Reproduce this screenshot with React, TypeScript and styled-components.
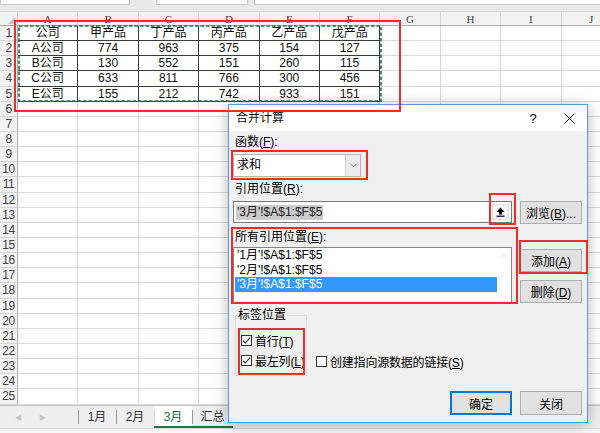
import styled, { createGlobalStyle } from 'styled-components'
import { ChevronDown, ChevronUp } from 'lucide-react'

const columns = ['A', 'B', 'C', 'D', 'E', 'F', 'G', 'H', 'I', 'J']

const table = [
  ['公司', '甲产品', '丁产品', '丙产品', '乙产品', '戊产品'],
  ['A公司', '774', '963', '375', '154', '127'],
  ['B公司', '130', '552', '151', '260', '115'],
  ['C公司', '633', '811', '766', '300', '456'],
  ['E公司', '155', '212', '742', '933', '151'],
]

const refs = ["'1月'!$A$1:$F$5", "'2月'!$A$1:$F$5", "'3月'!$A$1:$F$5"]

const sheets = [
  { name: '1月', width: 38 },
  { name: '2月', width: 38 },
  { name: '3月', width: 38, active: true, line: true },
  { name: '汇总', width: 41, line: true },
]

// red annotation frames drawn over the screenshot
const marks = [
  { left: 14, top: 20, width: 387, height: 92 },
  { left: 231, top: 150, width: 137, height: 30 },
  { left: 489, top: 193, width: 27, height: 32 },
  { left: 231, top: 227, width: 287, height: 77 },
  { left: 519, top: 240, width: 69, height: 34 },
  { left: 238, top: 328, width: 67, height: 47 },
]

const Check = () => (
  <svg width="9" height="9" viewBox="0 0 9 9">
    <path d="M1 4.6 L3.4 7 L8 1.6" fill="none" stroke="#333" strokeWidth="1.1" />
  </svg>
)

const Accel = ({ k }: { k: string }) => (
  <>
    (<u>{k}</u>)
  </>
)

export default function App() {
  return (
    <>
      <GlobalStyle />
      <Screen>
        <TopStrip>
          <FormulaBox $w={128} />
          <FormulaBox $w={90} />
          <FormulaBox $w={350} />
        </TopStrip>

        <Sheet>
          <HeaderRow>
            <Corner>
              <CornerTriangle />
            </Corner>
            {columns.map((c) => (
              <ColHead key={c}>{c}</ColHead>
            ))}
          </HeaderRow>
          {Array.from({ length: 25 }, (_, r) => (
            <Row key={r}>
              <RowHead>{r + 1}</RowHead>
              {columns.map((c, ci) => {
                const boxed = r < 5 && ci < 6
                return (
                  <Cell key={c} $boxed={boxed}>
                    {boxed ? table[r][ci] : ''}
                  </Cell>
                )
              })}
            </Row>
          ))}
          <Ants width="364" height="77">
            <rect x="1" y="1" width="362" height="75" fill="none" stroke="#1f7145" strokeWidth="1.6" strokeDasharray="3.5 2" />
          </Ants>
        </Sheet>

        <TabBar>
          <TabRow>
            <TabNav>
              <span>◀</span>
              <span>▶</span>
            </TabNav>
            {sheets.map((s) => (
              <SheetTab key={s.name} $w={s.width} $active={!!s.active} $line={!!s.line}>
                {s.name}
              </SheetTab>
            ))}
          </TabRow>
          <StatusStrip />
        </TabBar>

        <Dialog>
          <TitleBar>
            <Title>合并计算</Title>
            <TitleButton>?</TitleButton>
            <TitleButton>
              <svg width="11" height="11" viewBox="0 0 11 11">
                <path d="M0.5 0.5 L10.5 10.5 M10.5 0.5 L0.5 10.5" stroke="#111" strokeWidth="1" />
              </svg>
            </TitleButton>
          </TitleBar>

          <Body>
            <Label $mt={4}>
              函数<Accel k="F" />:
            </Label>
            <Select>
              <SelectValue>求和</SelectValue>
              <SelectArrow>
                <ChevronDown size={11} strokeWidth={1.4} color="#555" />
              </SelectArrow>
            </Select>

            <Label $mt={5}>
              引用位置<Accel k="R" />:
            </Label>
            <FieldRow>
              <RefInput>
                <Selected>'3月'!$A$1:$F$5</Selected>
                <RefButton>
                  <svg width="9" height="10" viewBox="0 0 9 10">
                    <path d="M4.5 0.5 L8.5 5 H6 V7.5 H3 V5 H0.5 Z" fill="#000" />
                    <rect x="0.5" y="8.6" width="8" height="1.2" fill="#000" />
                  </svg>
                </RefButton>
              </RefInput>
              <DlgButton>
                浏览<Accel k="B" />...
              </DlgButton>
            </FieldRow>

            <Label $mt={6}>
              所有引用位置<Accel k="E" />:
            </Label>
            <ListRow>
              <ListBox>
                <Items>
                  {refs.map((r, i) => (
                    <Item key={r} $selected={i === 2}>
                      {r}
                    </Item>
                  ))}
                </Items>
                <ScrollBar>
                  <ChevronUp size={10} strokeWidth={1.3} color="#bdbdbd" />
                  <ChevronDown size={10} strokeWidth={1.3} color="#bdbdbd" />
                </ScrollBar>
              </ListBox>
              <ButtonColumn>
                <DlgButton>
                  添加<Accel k="A" />
                </DlgButton>
                <DlgButton>
                  删除<Accel k="D" />
                </DlgButton>
              </ButtonColumn>
            </ListRow>

            <GroupRow>
              <Group>
                <Legend>标签位置</Legend>
                <CheckList>
                  <CheckRow>
                    <CheckBox>
                      <Check />
                    </CheckBox>
                    <span>
                      首行<Accel k="T" />
                    </span>
                  </CheckRow>
                  <CheckRow>
                    <CheckBox>
                      <Check />
                    </CheckBox>
                    <span>
                      最左列<Accel k="L" />
                    </span>
                  </CheckRow>
                </CheckList>
              </Group>
              <LinkCheck>
                <CheckBox />
                <span>
                  创建指向源数据的链接<Accel k="S" />
                </span>
              </LinkCheck>
            </GroupRow>

            <Footer>
              <DlgButton $primary $h={24}>
                确定
              </DlgButton>
              <DlgButton $h={24}>关闭</DlgButton>
            </Footer>
          </Body>
        </Dialog>

        {marks.map((m, i) => (
          <Mark key={i} style={{ left: m.left, top: m.top, width: m.width, height: m.height }} />
        ))}
      </Screen>
    </>
  )
}

const uiFont = `"Liberation Sans", "Noto Sans CJK SC", sans-serif`

const GlobalStyle = createGlobalStyle`
  body {
    margin: 0;
    background: #fff;
    font-family: ${uiFont};
  }
`

const Screen = styled.div`
  position: relative;
  width: 600px;
  height: 433px;
  overflow: hidden;
  display: flex;
  flex-direction: column;
  background: #fff;
`

const TopStrip = styled.div`
  height: 12px;
  flex: none;
  display: flex;
  align-items: flex-start;
  gap: 6px;
  background: #e9e9e9;
  border-bottom: 1px solid #d6d6d6;
  box-sizing: border-box;
`

const FormulaBox = styled.div<{ $w: number }>`
  width: ${(p) => p.$w}px;
  height: 4px;
  background: #fff;
  border: 1px solid #c6c6c6;
  border-top: none;
  flex: none;
  &:first-child {
    margin-right: 20px;
  }
`

const Sheet = styled.div`
  position: relative;
  flex: none;
  display: flex;
  flex-direction: column;
`

const HeaderRow = styled.div`
  display: flex;
  height: 14px;
  background: #f3f3f3;
  border-bottom: 1px solid #ababab;
  box-sizing: border-box;
`

const Corner = styled.div`
  position: relative;
  width: 18px;
  flex: none;
  border-right: 1px solid #d0d0d0;
  box-sizing: border-box;
`

const CornerTriangle = styled.div`
  position: absolute;
  right: 2px;
  bottom: 1px;
  width: 0;
  height: 0;
  border-left: 7px solid transparent;
  border-bottom: 7px solid #c4c4c4;
`

const ColHead = styled.div`
  width: 60.4px;
  flex: none;
  display: flex;
  align-items: center;
  justify-content: center;
  font-family: "Liberation Serif", serif;
  font-size: 11px;
  color: #444;
  border-right: 1px solid #d4d4d4;
  box-sizing: border-box;
`

const Row = styled.div`
  display: flex;
  height: 15.15px;
`

const RowHead = styled.div`
  width: 18px;
  flex: none;
  display: flex;
  align-items: center;
  justify-content: center;
  background: #f3f3f3;
  border-right: 1px solid #ababab;
  border-bottom: 1px solid #d4d4d4;
  box-sizing: border-box;
  font-size: 12px;
  color: #444;
  letter-spacing: -0.5px;
`

const Cell = styled.div<{ $boxed: boolean }>`
  width: 60.4px;
  flex: none;
  display: flex;
  align-items: center;
  justify-content: center;
  border-right: 1px solid ${(p) => (p.$boxed ? '#3a3a3a' : '#d9d9d9')};
  border-bottom: 1px solid ${(p) => (p.$boxed ? '#3a3a3a' : '#d9d9d9')};
  box-sizing: border-box;
  font-size: 12px;
  line-height: 1;
  color: #111;
`

const Ants = styled.svg`
  position: absolute;
  left: 18px;
  top: 13px;
`

const TabBar = styled.div`
  flex: 1;
  display: flex;
  flex-direction: column;
  background: #efefef;
  border-top: 1px solid #c6c6c6;
`

const TabRow = styled.div`
  display: flex;
  height: 22px;
`

const TabNav = styled.div`
  width: 78px;
  flex: none;
  display: flex;
  align-items: center;
  gap: 17px;
  padding-left: 15px;
  box-sizing: border-box;
  font-size: 7px;
  color: #c4c4c4;
`

const SheetTab = styled.div<{ $w: number; $active: boolean; $line: boolean }>`
  position: relative;
  width: ${(p) => p.$w}px;
  flex: none;
  display: flex;
  align-items: center;
  justify-content: center;
  box-sizing: border-box;
  font-size: 12px;
  color: ${(p) => (p.$active ? '#217346' : '#333')};
  background: ${(p) => (p.$active ? '#fff' : 'transparent')};
  border-bottom: 2px solid ${(p) => (p.$line ? '#217346' : 'transparent')};
  &::before {
    content: '';
    position: absolute;
    left: 0;
    top: 4px;
    bottom: 2px;
    border-left: 1px solid ${(p) => (p.$active ? '#d0d0d0' : '#9c9c9c')};
  }
`

const StatusStrip = styled.div`
  flex: 1;
  background: #f7f7f7;
  border-top: 1px solid #dadada;
`

const Dialog = styled.div`
  position: absolute;
  left: 228px;
  top: 104px;
  width: 360px;
  height: 319px;
  box-sizing: border-box;
  border: 1px solid #5a9ad8;
  background: #f0f0f0;
  box-shadow: 0 2px 14px rgba(0, 0, 0, 0.28);
  display: flex;
  flex-direction: column;
  font-family: ${uiFont};
  font-size: 12px;
  color: #000;
`

const TitleBar = styled.div`
  height: 26px;
  flex: none;
  display: flex;
  align-items: center;
  background: #fff;
  padding-left: 7px;
`

const Title = styled.div`
  flex: 1;
  line-height: 14px;
  color: #111;
`

const TitleButton = styled.div`
  width: 36px;
  height: 100%;
  display: flex;
  align-items: center;
  justify-content: center;
  font-size: 13px;
`

const Body = styled.div`
  flex: 1;
  display: flex;
  flex-direction: column;
  padding: 0 5px 7px 4px;
`

const Label = styled.div<{ $mt: number }>`
  margin-top: ${(p) => p.$mt}px;
  margin-left: 2px;
  line-height: 14px;
  height: 14px;
  & + * {
    margin-top: 5px;
  }
`

const Select = styled.div`
  width: 128px;
  height: 23px;
  box-sizing: border-box;
  display: flex;
  background: #fff;
  border: 1px solid #b4b4b4;
`

const SelectValue = styled.div`
  flex: 1;
  padding-left: 3px;
  line-height: 21px;
`

const SelectArrow = styled.div`
  width: 14px;
  display: flex;
  align-items: center;
  justify-content: center;
  background: #ececec;
  border-left: 1px solid #cfcfcf;
`

const FieldRow = styled.div`
  display: flex;
  gap: 8px;
`

const RefInput = styled.div`
  width: 279px;
  height: 22px;
  box-sizing: border-box;
  display: flex;
  align-items: center;
  justify-content: space-between;
  padding: 0 2px 0 2px;
  background: #fff;
  border: 1px solid #7a7a7a;
`

const Selected = styled.span`
  background: #cccccc;
  line-height: 15px;
  padding: 0 1px;
  color: #222;
`

const RefButton = styled.div`
  width: 17px;
  height: 16px;
  display: flex;
  align-items: center;
  justify-content: center;
  background: #f6f6f6;
  border: 1px solid #e0e0e0;
  box-sizing: border-box;
`

const DlgButton = styled.button<{ $primary?: boolean; $h?: number }>`
  width: 62px;
  height: ${(p) => p.$h ?? 23}px;
  flex: none;
  padding: 0;
  box-sizing: border-box;
  font-family: inherit;
  font-size: 12px;
  color: #000;
  background: #e1e1e1;
  border: 1px solid ${(p) => (p.$primary ? '#0078d7' : '#adadad')};
  box-shadow: ${(p) => (p.$primary ? 'inset 0 0 0 1px #0078d7' : 'none')};
`

const ListRow = styled.div`
  display: flex;
  gap: 8px;
  margin-top: 3px;
`

const ListBox = styled.div`
  width: 279px;
  height: 56px;
  box-sizing: border-box;
  display: flex;
  background: #fff;
  border: 1px solid #828790;
`

const Items = styled.div`
  flex: 1;
  padding-left: 1px;
`

const Item = styled.div<{ $selected: boolean }>`
  height: 14.5px;
  line-height: 14.5px;
  padding-left: 2px;
  background: ${(p) => (p.$selected ? '#3399ff' : 'transparent')};
  color: ${(p) => (p.$selected ? '#fff' : '#000')};
`

const ScrollBar = styled.div`
  width: 14px;
  display: flex;
  flex-direction: column;
  justify-content: space-between;
  align-items: center;
  padding: 3px 0 1px;
`

const ButtonColumn = styled.div`
  display: flex;
  flex-direction: column;
  gap: 8px;
  padding-top: 2px;
`

const GroupRow = styled.div`
  display: flex;
  align-items: flex-end;
  margin-top: 5px;
`

const Group = styled.fieldset`
  margin: 0 0 0 2px;
  width: 72px;
  min-width: 0;
  box-sizing: border-box;
  padding: 0 1px 7px 5px;
  border: 1px solid #dcdcdc;
`

const Legend = styled.legend`
  padding: 0 1px;
  margin-left: -4px;
  line-height: 14px;
  font-size: 12px;
`

const CheckList = styled.div`
  display: flex;
  flex-direction: column;
  gap: 4px;
  margin-top: 10px;
`

const CheckRow = styled.div`
  display: flex;
  align-items: center;
  gap: 3px;
  height: 16px;
  white-space: nowrap;
  letter-spacing: -0.2px;
`

const LinkCheck = styled(CheckRow)`
  margin: 0 0 7px 9px;
`

const CheckBox = styled.span`
  width: 11px;
  height: 11px;
  flex: none;
  box-sizing: border-box;
  display: flex;
  align-items: center;
  justify-content: center;
  background: #fff;
  border: 1px solid #333;
`

const Footer = styled.div`
  margin-top: auto;
  display: flex;
  justify-content: flex-end;
  gap: 8px;
`

const Mark = styled.div`
  position: absolute;
  box-sizing: border-box;
  border: 2px solid #f22b2b;
  pointer-events: none;
`
